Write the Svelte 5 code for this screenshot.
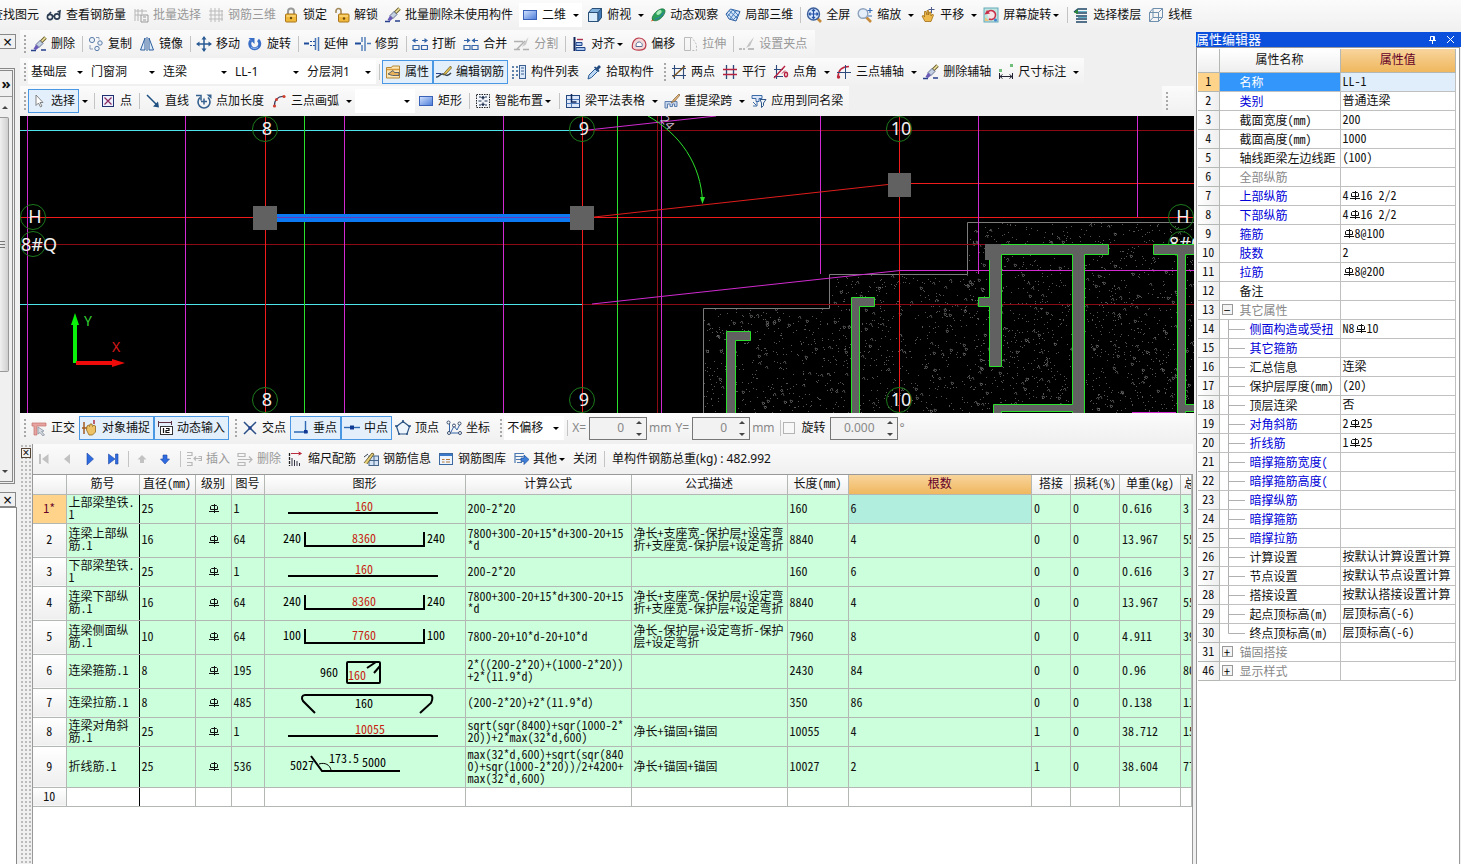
<script>
  const icons = {
    glasses: '<g fill="none" stroke="#2b3c52" stroke-width="1.6"><circle cx="4" cy="10" r="2.6"/><circle cx="11" cy="9.5" r="2.6"/><path d="M6.5 9.5l2-.5M13.5 8.5L14 4l-2.500 1M2 8.500L5 5"/></g>',
    batch: '<path d="M2 2v12M5 2v12M2 4h12M2 8h6M9 2v5" fill="none" stroke="#b5b5b5"/><path d="M8 8h7v7H8zM10 10h3M10 13h3" fill="none" stroke="#999"/>',
    mesh: '<path d="M3 1v14M7 1v14M11 1v14M14 3v11M1 4h14M1 8h14M1 12h14" fill="none" stroke="#bbb"/>',
    lock: '<path d="M5 8V4.500a3 3 0 0 1 6 0V8" fill="none" stroke="#9a9a9a" stroke-width="2"/><rect x="2.500" y="7" width="11" height="8" rx="1" fill="#f0b93c" stroke="#a9741a"/><path d="M3.500 9h9" stroke="#ffe59a"/><circle cx="8" cy="11" r="1.200" fill="#6b470d"/>',
    unlock: '<path d="M2 6V4a2.500 2.500 0 0 1 5 0v4" fill="none" stroke="#a38a5c" stroke-width="1.600"/><rect x="4.500" y="7" width="10.500" height="8" rx="1" fill="#f0b93c" stroke="#a9741a"/><path d="M5.500 9h8.500" stroke="#ffe59a"/><circle cx="10" cy="11.500" r="1.200" fill="#6b470d"/>',
    brush: '<path d="M14.500 1.500L10 6" stroke="#6d6030" stroke-width="3.600"/><path d="M14.500 1.500L10.500 5.500" stroke="#f3e7a0" stroke-width="1.600"/><path d="M9 4.500l3 3-4 4-3-3z" fill="#c3d0e2" stroke="#4a5878" stroke-width=".8"/><path d="M5 8.500l3 3-3 2.500-2.500-1z" fill="#6a5ab8"/><path d="M0 14.500h5M10 14h5" stroke="#27408c" stroke-width="1.600"/>',
    rect: '<defs><linearGradient id="rg" x2="1" y2="1"><stop stop-color="#d3e4ff"/><stop offset="1" stop-color="#4a7ad8"/></linearGradient></defs><rect x="1.500" y="3.500" width="13" height="9" fill="url(#rg)" stroke="#3a62b8"/>',
    cube: '<path d="M1.500 5.500L5 1.500h9.500v9L11 14.500H1.500z" fill="#7fb0dc" stroke="#2a5078"/><path d="M1.500 5.500H11v9H1.500z" fill="#d8ecfb" stroke="#2a5078"/><path d="M11 5.500l3.500-4v9l-3.500 4z" fill="#3f78b4" stroke="#2a5078"/>',
    orbit: '<path d="M1 14.500L5 13 3 10.500z" fill="#d65a20"/><path d="M3 13C0 11 6 3 11 2s5 3 2 7-8 6-10 4z" fill="#2aa05a" stroke="#156a38" stroke-width=".7"/><ellipse cx="9" cy="5.500" rx="3" ry="1.800" transform="rotate(-35 9 5.500)" fill="#a5ecb9"/><path d="M5 12c3 0 7-3 8.500-6.500" fill="none" stroke="#2b6fc0"/>',
    local: '<path d="M1 7l4.500-5L15 4.500 11 14 4 12z" fill="#cfe2f6" stroke="#2d5f9e"/><path d="M4 3.500l8.500 8M7.500 2.500l6 6M2.500 6.500l6 6.500M11.500 3.500L5 12M14 7L8 13M8 2.500L2.500 9.500" stroke="#3a76b8" stroke-width=".9" fill="none"/>',
    fit: '<path d="M11 11l4 4" stroke="#c58a3a" stroke-width="2.600"/><circle cx="7.500" cy="7" r="6" fill="#d5e6fb" stroke="#3c5f9a" stroke-width="1.400"/><path d="M7.500 2.500v9M3 7h9M6 4l1.500-1.500L9 4M6 10l1.500 1.500L9 10M4.500 5.500L3 7l1.500 1.500M10.500 5.500L12 7l-1.500 1.500" fill="none" stroke="#2452a8" stroke-width="1.100"/>',
    zoom: '<path d="M9 10l5 5" stroke="#c58a3a" stroke-width="2.600"/><circle cx="6" cy="6.500" r="4.800" fill="#e4eefb" stroke="#8ea2bc" stroke-width="1.400"/><path d="M13 1v5M10.500 3.500h5M11 9h4" stroke="#3a6eb8" stroke-width="1.200"/>',
    pan: '<path d="M2 9l1.500-.5 1 1.500V4.500h1.500L7 8V3.500h1.500V8l1-3h1.500v4l1.500-2 1 1-2.500 6.500H5z" fill="#edb94a" stroke="#a06f17" stroke-width=".8"/><path d="M11.500 0v6M8.500 2.500h6" stroke="#4a5a8a"/>',
    spin: '<rect x="1" y="1" width="14" height="14" fill="#bfe6e0" stroke="#62a9b8"/><path d="M2 10l4 4H2z" fill="#f0c27a"/><path d="M4 6a4.500 4.500 0 1 1 2 6" fill="#f7e3e6" stroke="#c8304a" stroke-width="1.600"/><path d="M1.500 7.500L4 3l3 3.500z" fill="#c8304a"/><circle cx="12.500" cy="13" r="1.500" fill="#3f7fd0"/>',
    floors: '<path d="M1 5l4-3h9M3 9h11M3 12h11M3 15h11M3 6h11" fill="none" stroke="#1e4566" stroke-width="1.500"/><path d="M1 5.500L5 2v5z" fill="#2b8a3a"/><path d="M5 4.500h9M5 10.500h9" stroke="#5bb0c8"/>',
    wire: '<path d="M1.500 5.500h9v9h-9zM5 1.500h9.500v9M1.500 5.500L5 1.500M10.500 5.500l4-4M10.500 14.500l4-4M5 1.500v9h9.500M1.500 14.500l3.500-4" fill="none" stroke="#6f8fae"/>',
    copy: '<circle cx="4" cy="4" r="2.600" fill="#eaf2fb" stroke="#5b7ba8"/><circle cx="12" cy="7" r="2.200" fill="#eaf2fb" stroke="#5b7ba8"/><circle cx="9" cy="12.500" r="2.200" fill="#eaf2fb" stroke="#5b7ba8"/><path d="M8 1.500h3v2M2 9v4h3" fill="none" stroke="#8a9cb8"/>',
    mirror: '<path d="M6 2v12H1.500zM10 2v12h4.500z" fill="#dce9f8" stroke="#2d5f9e"/><path d="M8 1v14" stroke="#2d5f9e"/>',
    move: '<path d="M8 1v14M1 8h14" stroke="#2a5b94" stroke-width="1.500"/><path d="M8 0l2.500 3.500h-5zM8 16l2.500-3.500h-5zM0 8l3.500-2.500v5zM16 8l-3.500-2.500v5z" fill="#2a5b94"/>',
    rotate: '<path d="M4 4.500a5 5 0 1 0 7-.5" fill="none" stroke="#3a6fc8" stroke-width="3"/><path d="M1.500 2h6v6z" fill="#3a6fc8"/><path d="M4 11a5 5 0 0 0 7 0" fill="none" stroke="#9fc0f2"/>',
    extend: '<path d="M0 7.500h5" stroke="#1d4c9a" stroke-width="2"/><path d="M6 5.500h5M6 9.500h5" stroke="#1d4c9a" stroke-dasharray="2 1"/><path d="M11.500 2v12M14.500 1v14" stroke="#4a77b8" stroke-width="1.500"/>',
    trim: '<path d="M0 7.500h6" stroke="#1d4c9a" stroke-width="2"/><path d="M7 1v5M7 9v6M10 1v14M12 7.500h4" stroke="#4a77b8" stroke-width="1.400"/>',
    brk: '<path d="M3 4.500h3M10 4.500h3M1 9.500h6v4H1zM9.500 9.500h6v4h-6z" fill="none" stroke="#3565a8" stroke-width="1.200"/><path d="M0 4.500L3.500 2v5zM16 4.500L12.500 2v5z" fill="#3565a8"/>',
    join: '<path d="M1 4.500h4M11 4.500h4M1 9.500h6v4H1zM9 9.500h6v4H9z" fill="none" stroke="#3565a8" stroke-width="1.200"/><path d="M7.500 4.500L4 2v5zM8.500 4.500L12 2v5z" fill="#3565a8"/>',
    split: '<path d="M0 5.500h9M0 13.500h6M9 13.500h6M3 13l8-8" fill="none" stroke="#b0b0b0" stroke-width="1.400"/><path d="M14.500 1L10 7l-2 4 4-2.500z" fill="#c8c8c8"/>',
    align: '<path d="M3.500 1v14" stroke="#10285c" stroke-width="2"/><path d="M5 6.500h6v3H5zM5 11.500h9v3H5z" fill="#a9c6ee" stroke="#1f458a"/><path d="M6 3.500h6" stroke="#b03050" stroke-width="1.400"/>',
    offset: '<path d="M1.500 12c-1-5 2-10 6.500-10s8 4 6.500 9c-1 4-11 4-13 1z" fill="#f3d9d9" stroke="#bb3b4b" stroke-width="1.200"/><path d="M5 10.500c0-3 1-4.500 3-4.500s4 2 3 4.500z" fill="#fff" stroke="#5a6d94"/>',
    stretch: '<path d="M2.500 14.500v-13h6v13z" fill="none" stroke="#bbb"/><path d="M9 1.500h1l4.500 7v6H9" fill="none" stroke="#bbb" stroke-dasharray="2 1.500"/>',
    grips: '<path d="M0 13h3M4 13h2M9 13h6" stroke="#aaa" stroke-width="1.500"/><path d="M15 1l-5 6-3 5 4-2z" fill="#c4c4c4"/>',
    props: '<path d="M1.500 3.500h5l1-1.500h7v12h-13z" fill="#fbe6b4" stroke="#b78735"/><path d="M2 5.500h12" stroke="#d89a3a" stroke-width="1.500"/><path d="M3 10l5-3.500 1.500 2H14v3H7.500z" fill="#e8b25a" stroke="#3d4b66" stroke-width=".8"/>',
    edit: '<path d="M0 13c3 1 4-4 7-3s4 3 8-1" fill="none" stroke="#33404f" stroke-width="1.500"/><path d="M14.500 2L9 8l-2 3 3-1 5.500-6z" fill="#e5c14f" stroke="#5e5326" stroke-width=".7"/><path d="M0 9.500h5" stroke="#27408c"/>',
    list: '<path d="M1 3h2M1 7h2M1 11h2M1 14h2M5 3h2M5 7h2M5 11h2" stroke="#2f5d93" stroke-width="1.300"/><rect x="8.500" y="1.500" width="6" height="13" fill="#dceafa" stroke="#3a5f90"/><path d="M10 4h3M10 7h3M10 10h3" stroke="#3a5f90"/>',
    pick: '<path d="M2 15l1-4 6-6 2.500 2.500-6 6z" fill="#bcd8f4" stroke="#2b5c94"/><path d="M8 3.500L12.500 8 13.500 7l-1-1.500L15 3l-2-2-2.500 2.500L9 2.500z" fill="#234b80"/>',
    two: '<path d="M3.500 1v14M12.500 1v14M1 4.500h14M1 11.500h14" stroke="#2d4a7c" stroke-width="1.100"/><path d="M2 13L14 2" stroke="#7a5520" stroke-width="1.400"/>',
    parallel: '<path d="M4.500 1v14M11.500 1v14" stroke="#2d4a7c" stroke-width="1.300"/><path d="M1 5.500h14M1 10.500h14" stroke="#b82040" stroke-width="1.300"/>',
    angle: '<path d="M3.500 1v14M1 12.500h9M1 5.500h9" stroke="#2d4a7c" stroke-width="1.100"/><path d="M1 14L12 2" stroke="#b82040" stroke-width="1.400"/><path d="M9 9.500l3-3" stroke="#b82040"/><ellipse cx="13" cy="10.500" rx="1.500" ry="2.200" fill="none" stroke="#b82040" stroke-width="1.400"/>',
    arc3: '<path d="M2 13.500C2 6 6 2.500 13 2.500" fill="none" stroke="#c02840" stroke-width="1.500"/><path d="M9.500 1v14M1 8.500h14" stroke="#2d4a7c"/><circle cx="2.500" cy="13" r="1.700" fill="#c02840"/>',
    dim: '<path d="M1.500 9v6M14.500 9v6M2 12.500h12M4.500 10.500l-2.500 2 2.500 2M11.500 10.500l2.500 2-2.500 2" fill="none" stroke="#223"/><path d="M1 5h3v3H1zM12 0h3v3h-3z" fill="#6fbf7a"/>',
    cursor: '<path d="M5 2v10.500l2.500-2.500L9.500 14l1.500-1-2-3.500H12z" fill="#fff" stroke="#777" stroke-width=".9"/>',
    point: '<rect x="2.500" y="2.500" width="11" height="11" fill="#eef0fb" stroke="#1f2f70"/><path d="M4.500 4.500l7 7M11.500 4.500l-7 7" stroke="#8a2a60" stroke-width="1.200"/>',
    line: '<path d="M2 2l10 10" stroke="#1f4f80" stroke-width="1.500"/><path d="M14 14.500l-1-6-5 5z" fill="#1f4f80"/>',
    ptlen: '<path d="M4 4.500a6 6 0 1 0 8 0" fill="none" stroke="#35618f" stroke-width="1.600"/><path d="M0 2.500h5v5M8 5.500v6M5 8.500h6" fill="none" stroke="#35618f" stroke-width="1.500"/><path d="M10.500 1.500h5v4.500z" fill="#35618f"/>',
    arc: '<path d="M3.500 13C3 7 7 3 13 3.500" fill="none" stroke="#3a3a5c" stroke-width="1.200"/><circle cx="3.500" cy="13" r="1.600" fill="#d04030"/><circle cx="5.500" cy="6.500" r="1.500" fill="#d04030"/><circle cx="13" cy="3.500" r="1.600" fill="#d04030"/>',
    smart: '<rect x="1.500" y="1.500" width="13" height="13" fill="#f2f6fb" stroke="#222" stroke-dasharray="1.500 1"/><path d="M8 3.500v3M8 9.500v3M3.500 8h3M9.500 8h3M4 4h2M10 4h2M4 12h2M10 12h2M6.500 5L8 3.500 9.500 5M6.500 11L8 12.500 9.500 11" fill="none" stroke="#1f2f50" stroke-width="1.200"/>',
    table: '<rect x="1.500" y="2.500" width="13" height="12" fill="#dce8fa" stroke="#24487e"/><path d="M1.500 6.500h13M1.500 10.500h13M6.500 2.500v12" stroke="#4a77b8"/><path d="M6.500 1v8h5" fill="none" stroke="#10285c" stroke-width="1.500"/>',
    respan: '<path d="M1 8.500h12v5h-2.500v-2.500h-2v2.500H6v-2.500H3.500v4H1z" fill="#c5d5ec" stroke="#5f7fae"/><path d="M15 1l-5 5-3 4 4-2 5-6z" fill="#e3b377" stroke="#80603a" stroke-width=".7"/>',
    apply: '<path d="M1 2.500h10v3H8v3H5v-3H1z" fill="#dce8fa" stroke="#3d6ba8"/><path d="M9 6.500h6l-2.500 3.500v2.500l-2 2V10z" fill="#f1f6fd" stroke="#2f5688"/><path d="M2 9l3.500 3.500M6 9v4H2" stroke="#3d6ba8" fill="none"/>',
    ortho: '<path d="M1 3h14v3H6v9H3V6H1z" fill="#e7a3a0" stroke="#c4706c" stroke-width=".7"/><path d="M7 7v7l2-1.500 3 3.500 1.500-1-3-3.500 2.500-.5z" fill="#d9dde3" stroke="#8892a0" stroke-width=".8"/>',
    osnap: '<path d="M2 2v12M0 8h5" stroke="#a35b20" stroke-width="1.500"/><path d="M5 6l1.500-1 1 1.500L8 4h2l.5 2.500L12 5l1.500 1v6l-3 3H7L4.500 10z" fill="#edc266" stroke="#96671b" stroke-width=".8"/><path d="M12 0v4" stroke="#b03040" stroke-width="1.500"/>',
    dyn: '<path d="M1 2.500h14M1.500 1v6M14.500 1v4" stroke="#5c3040"/><rect x="3.500" y="6.500" width="12" height="8" fill="#fff" stroke="#333"/><path d="M6.500 8v5M9 8.500h3v2H9v2h3.500" fill="none" stroke="#111" stroke-width="1.200"/>',
    cross: '<path d="M2 2l12 12M14 2L2 14" stroke="#2a4f86" stroke-width="1.500"/><circle cx="8" cy="8" r="1.700" fill="#1f3f90"/>',
    perp: '<path d="M1 12h14M12.500 1v11" stroke="#2f69b4" stroke-width="1.400"/><rect x="11" y="10" width="3.500" height="3.500" fill="#123a94"/>',
    mid: '<path d="M0 7.500h16" stroke="#2f69b4" stroke-width="1.400"/><rect x="6" y="5.500" width="4" height="4" fill="#123a94"/>',
    pent: '<path d="M8 1.500l6.500 5-2.500 7.500H4L1.500 6.500z" fill="#eef5fc" stroke="#2d5585" stroke-width="1.200"/><path d="M8 0v3M13 6h3M0 6h3M3 14h2M11 14h2" stroke="#2d5585" stroke-width="1.600"/>',
    coord: '<path d="M3.500 3v10h11M5 12l3-6 3 4 3-6" fill="none" stroke="#3565a8"/><g fill="#fff" stroke="#3a4f70"><circle cx="2.500" cy="2.500" r="1.500"/><circle cx="3" cy="13" r="1.500"/><circle cx="8" cy="5.500" r="1.500"/><circle cx="13.500" cy="3.500" r="1.500"/><circle cx="14" cy="13" r="1.500"/></g>',
    first: '<path d="M3 3h2v10H3zM12.500 3v10L6 8z" fill="#c2c2c2"/>',
    prev: '<path d="M11 3v10L5 8z" fill="#c2c2c2"/>',
    next: '<path d="M5 2v12l6.500-6z" fill="#2f6be0" stroke="#1c46a4" stroke-width=".6"/>',
    last: '<path d="M3.500 3v10L10 8zM10.500 3h2.500v10h-2.500z" fill="#2f6be0" stroke="#1c46a4" stroke-width=".6"/>',
    up: '<path d="M8 4l4.500 4.500h-2.500V12H6V8.500H3.500z" fill="#c2c2c2"/>',
    down: '<path d="M8 13l4.500-5h-2.500V4H6v4H3.500z" fill="#2f6be0" stroke="#1c46a4" stroke-width=".6"/>',
    insert: '<path d="M1 1.500h5v3H1M1 7.500h4M1 11.500h5v3H1M8 7.500h8M10 5.500l-2 2 2 2M12.500 5.500h3v4h-3" fill="none" stroke="#b8b8b8" stroke-width="1.200"/>',
    del: '<path d="M1 2.500h7v3H1zM1 11.500h7v3H1zM1 8.500h14M12 5.500l3 3-3 3" fill="none" stroke="#b8b8b8" stroke-width="1.200"/>',
    scale: '<path d="M1.500 2v13" stroke="#222" stroke-width="1.300" stroke-dasharray="3 1"/><path d="M3 2.500h10M10.500 1l3 1.500-3 1.500" fill="none" stroke="#b83040"/><path d="M4 7v8M6.500 9v6M9 10v5M11.500 12v3" stroke="#334"/>',
    info: '<rect x="6" y="5" width="9.500" height="9.500" fill="#d3e2f4" stroke="#46648a"/><path d="M6 9.500h9.500M11 5v9.500" stroke="#46648a"/><path d="M1 12L9 2l2 1-7 10" fill="#e7d27a" stroke="#55491c" stroke-width=".8"/><path d="M1 6l4-3" stroke="#33404f"/>',
    lib: '<rect x="1.500" y="2.500" width="13" height="11" fill="#eef4fb" stroke="#3c6aa0"/><path d="M2 4h12" stroke="#3c78c8" stroke-width="2"/><path d="M4 8.500h2.500M8 8.500h4M4 11h2.500M8 11h4" stroke="#b87a3a" stroke-width="1.200"/>',
    other: '<path d="M2 2.500h9M1.500 5.500h9M3 8.500h6M4 11.500h5M2 2v10" fill="none" stroke="#4c78b0" stroke-width="1.200"/><path d="M8 7h3V4l5 4.500-5 5v-3H8z" fill="#3f7fd8" stroke="#20539e" stroke-width=".7"/>'
  };

  // tool: [icon, label, flags]; flags: d = disabled, a = active, s = split drop-down, m = attached drop-down, w = white
  const topBar = [
    ['glasses', '查找图元'], ['glasses', '查看钢筋量'], ['batch', '批量选择', 'd'], ['mesh', '钢筋三维', 'd'],
    ['lock', '锁定'], ['unlock', '解锁'], ['brush', '批量删除未使用构件'], 'gap',
    ['rect', '二维', 'sw'], 'gap', ['cube', '俯视', 's'], ['orbit', '动态观察'], ['local', '局部三维'], 'sep',
    ['fit', '全屏'], ['zoom', '缩放', 's'], ['pan', '平移', 's'], ['spin', '屏幕旋转', 'm'], 'sep',
    ['floors', '选择楼层'], ['wire', '线框']
  ];

  const editBar = [
    'grip', ['brush', '删除'], 'sep', ['copy', '复制'], ['mirror', '镜像'], 'sep', ['move', '移动'], ['rotate', '旋转'], 'sep',
    ['extend', '延伸'], ['trim', '修剪'], 'sep', ['brk', '打断'], ['join', '合并'], ['split', '分割', 'd'], 'sep',
    ['align', '对齐', 'm'], ['offset', '偏移'], ['stretch', '拉伸', 'd'], 'sep', ['grips', '设置夹点', 'd']
  ];

  const componentBar = [
    'grip', { combo: '基础层', name: '楼层', small: true }, { combo: '门窗洞', name: '构件类型' }, { combo: '连梁', name: '构件' },
    { combo: 'LL-1', name: '构件名称' }, { combo: '分层洞1', name: '分层' }, 'sep',
    ['props', '属性', 'a'], ['edit', '编辑钢筋', 'a'], ['list', '构件列表'], ['pick', '拾取构件']
  ];

  const axisBar = [
    'grip', ['two', '两点'], ['parallel', '平行'], ['angle', '点角', 's'], ['arc3', '三点辅轴', 's'],
    ['brush', '删除辅轴'], ['dim', '尺寸标注', 's']
  ];

  const drawBar = [
    'grip', ['cursor', '选择', 'as'], 'sep', ['point', '点'], 'sep', ['line', '直线'], ['ptlen', '点加长度'], ['arc', '三点画弧', 's'],
    { combo: '', name: '画弧方式', small: true }, ['rect', '矩形'], 'sep', ['smart', '智能布置', 'm'], 'sep',
    ['table', '梁平法表格', 's'], ['respan', '重提梁跨', 's'], ['apply', '应用到同名梁']
  ];

  const snapBar = [
    'grip', ['ortho', '正交'], ['osnap', '对象捕捉', 'a'], ['dyn', '动态输入', 'a'], 'gap', 'grip',
    ['cross', '交点'], ['perp', '垂点', 'a'], ['mid', '中点', 'a'], ['pent', '顶点'], ['coord', '坐标'], 'gap', 'grip',
    { combo: '不偏移', name: '偏移方式', small: true }, 'sep'
  ];

  const rebarBar = [
    ['insert', '插入', 'd'], ['del', '删除', 'd'], ['scale', '缩尺配筋'], ['info', '钢筋信息'],
    ['lib', '钢筋图库'], ['other', '其他', 'm'], ['', '关闭'], 'sep'
  ];

  const columns = ['筋号', '直径(mm)', '级别', '图号', '图形', '计算公式', '公式描述', '长度(mm)', '根数', '搭接', '损耗(%)', '单重(kg)', '总重(kg)'];

  const bendNote = '净长+支座宽-保护层+设定弯\n折+支座宽-保护层+设定弯折';
  const bendFormula = '7800+300-20+15*d+300-20+15\n*d';

  const rebars = [
    { no: '1*', h: 29, name: '上部梁垫铁.\n1', d: 25, fig: 1, shape: 'straight', len: '160', formula: '200-2*20', note: '', total: 160, count: 6, lap: 0, unit: '0.616', sum: '3.696' },
    { no: '2', h: 34, name: '连梁上部纵\n筋.1', d: 16, fig: 64, shape: 'bent', len: '8360', side: '240', formula: bendFormula, note: bendNote, total: 8840, count: 4, lap: 0, unit: '13.967', sum: '55.868' },
    { no: '3', h: 29, name: '下部梁垫铁.\n1', d: 25, fig: 1, shape: 'straight', len: '160', formula: '200-2*20', note: '', total: 160, count: 6, lap: 0, unit: '0.616', sum: '3.696' },
    { no: '4', h: 34, name: '连梁下部纵\n筋.1', d: 16, fig: 64, shape: 'bent', len: '8360', side: '240', formula: bendFormula, note: bendNote, total: 8840, count: 4, lap: 0, unit: '13.967', sum: '55.868' },
    { no: '5', h: 34, name: '连梁侧面纵\n筋.1', d: 10, fig: 64, shape: 'bent', len: '7760', side: '100', formula: '7800-20+10*d-20+10*d', note: '净长-保护层+设定弯折-保护\n层+设定弯折', total: 7960, count: 8, lap: 0, unit: '4.911', sum: '39.288' },
    { no: '6', h: 34, name: '连梁箍筋.1', d: 8, fig: 195, shape: 'stirrup', formula: '2*((200-2*20)+(1000-2*20))\n+2*(11.9*d)', note: '', total: 2430, count: 84, lap: 0, unit: '0.96', sum: '80.64' },
    { no: '7', h: 29, name: '连梁拉筋.1', d: 8, fig: 485, shape: 'tie', formula: '(200-2*20)+2*(11.9*d)', note: '', total: 350, count: 86, lap: 0, unit: '0.138', sum: '11.868' },
    { no: '8', h: 29, name: '连梁对角斜\n筋.1', d: 25, fig: 1, shape: 'straight', len: '10055', formula: 'sqrt(sqr(8400)+sqr(1000-2*\n20))+2*max(32*d,600)', note: '净长+锚固+锚固', total: 10055, count: 4, lap: 1, unit: '38.712', sum: '154.848' },
    { no: '9', h: 41, name: '折线筋.1', d: 25, fig: 536, shape: 'fold', formula: 'max(32*d,600)+sqrt(sqr(840\n0)+sqr(1000-2*20))/2+4200+\nmax(32*d,600)', note: '净长+锚固+锚固', total: 10027, count: 2, lap: 1, unit: '38.604', sum: '77.208' }
  ];

  // k: b = blue (public), g = grey (group), child rows hang on the tree line
  const properties = [
    { n: 1, name: '名称', value: 'LL-1' },
    { n: 2, name: '类别', value: '普通连梁', k: 'b' },
    { n: 3, name: '截面宽度(mm)', value: '200' },
    { n: 4, name: '截面高度(mm)', value: '1000' },
    { n: 5, name: '轴线距梁左边线距', value: '(100)' },
    { n: 6, name: '全部纵筋', value: '', k: 'g' },
    { n: 7, name: '上部纵筋', value: '4Φ16 2/2', k: 'b' },
    { n: 8, name: '下部纵筋', value: '4Φ16 2/2', k: 'b' },
    { n: 9, name: '箍筋', value: 'Φ8@100', k: 'b' },
    { n: 10, name: '肢数', value: '2', k: 'b' },
    { n: 11, name: '拉筋', value: 'Φ8@200', k: 'b' },
    { n: 12, name: '备注', value: '' },
    { n: 13, name: '其它属性', value: '', k: 'g', toggle: '−' },
    { n: 14, name: '侧面构造或受扭', value: 'N8Φ10', k: 'b', child: true },
    { n: 15, name: '其它箍筋', value: '', k: 'b', child: true },
    { n: 16, name: '汇总信息', value: '连梁', child: true },
    { n: 17, name: '保护层厚度(mm)', value: '(20)', child: true },
    { n: 18, name: '顶层连梁', value: '否', child: true },
    { n: 19, name: '对角斜筋', value: '2Φ25', k: 'b', child: true },
    { n: 20, name: '折线筋', value: '1Φ25', k: 'b', child: true },
    { n: 21, name: '暗撑箍筋宽度(', value: '', k: 'b', child: true },
    { n: 22, name: '暗撑箍筋高度(', value: '', k: 'b', child: true },
    { n: 23, name: '暗撑纵筋', value: '', k: 'b', child: true },
    { n: 24, name: '暗撑箍筋', value: '', k: 'b', child: true },
    { n: 25, name: '暗撑拉筋', value: '', k: 'b', child: true },
    { n: 26, name: '计算设置', value: '按默认计算设置计算', child: true },
    { n: 27, name: '节点设置', value: '按默认节点设置计算', child: true },
    { n: 28, name: '搭接设置', value: '按默认搭接设置计算', child: true },
    { n: 29, name: '起点顶标高(m)', value: '层顶标高(-6)', child: true },
    { n: 30, name: '终点顶标高(m)', value: '层顶标高(-6)', child: true, last: true },
    { n: 31, name: '锚固搭接', value: '', k: 'g', toggle: '+' },
    { n: 46, name: '显示样式', value: '', k: 'g', toggle: '+' }
  ];

  // concrete hatch: fixed seed so that the pattern is stable between renders
  function hatch() {
    let seed = 7;
    const rnd = () => (seed = (seed * 16807) % 2147483647) / 2147483647;
    let dots = '';
    let stones = '';
    for (let i = 0; i < 2300; i++) {
      dots += `M${703 + Math.floor(rnd() * 491)} ${222 + Math.floor(rnd() * 191)}h1v1h-1z`;
    }
    for (let i = 0; i < 330; i++) {
      const x = 703 + Math.floor(rnd() * 491);
      const y = 222 + Math.floor(rnd() * 191);
      stones += rnd() > 0.5 ? `M${x} ${y}l3 1l-2 2z` : `M${x} ${y}l2 -2l1 3`;
    }
    return { dots, stones };
  }
  const concrete = hatch();

  const axisMarks = [
    { x: 265, y: 129, t: '8' }, { x: 582, y: 129, t: '9' }, { x: 899, y: 129, t: '10' },
    { x: 265, y: 400, t: '8' }, { x: 582, y: 400, t: '9' }, { x: 899, y: 400, t: '10' },
    { x: 33, y: 217, t: 'H' }, { x: 1181, y: 217, t: 'H' }
  ];

  let selected = $state(1);
</script>

{#snippet icon(name)}
  <svg class="icon" viewBox="0 0 16 16" aria-hidden="true">{@html icons[name]}</svg>
{/snippet}

{#snippet bar(items)}
  {#each items as it}
    {#if it === 'sep'}
      <span class="sep"></span>
    {:else if it === 'gap'}
      <span class="gap"></span>
    {:else if it === 'grip'}
      <span class="grip"></span>
    {:else if Array.isArray(it)}
      {@const f = it[2] ?? ''}
      <button class="tool" class:active={f.includes('a')} class:white={f.includes('w')} disabled={f.includes('d')}>
        {#if it[0]}{@render icon(it[0])}{/if}
        <span>{it[1]}</span>
        {#if f.includes('m')}<i class="caret attached"></i>{/if}
      </button>
      {#if f.includes('s')}
        <button class="split" class:white={f.includes('w')} aria-label="{it[1]}选项"><i class="caret"></i></button>
      {/if}
    {:else}
      <span class="combo" class:small={it.small}>
        <select aria-label={it.name}><option>{it.combo}</option></select>
        <i class="caret"></i>
      </span>
    {/if}
  {/each}
{/snippet}

{#snippet rebarMark()}
  <svg class="mark" viewBox="0 0 12 10" role="img" aria-label="三级钢"><path d="M3.500 1.500h5l1 1v3h-7v-3zM6.500 0v9M1 7.500h10" fill="none" stroke="currentColor" /></svg>
{/snippet}

{#snippet spinner(id, value, wide)}
  <span class="spinner" class:wide>
    <input {id} type="text" {value} disabled />
    <span class="steps"><i class="up"></i><i class="down"></i></span>
  </span>
{/snippet}

{#snippet shape(r)}
  <svg class="shape" width="200" height={r.h - 1} viewBox="0 0 200 {r.h - 1}">
    {#if r.shape === 'straight'}
      <text class="red" x="90" y="16">{r.len}</text>
      <path d="M23 18H173" />
    {:else if r.shape === 'bent'}
      <text x="18" y="19">{r.side}</text>
      <path d="M40 8V22H159V8" />
      <text class="red" x="87" y="19">{r.len}</text>
      <text x="162" y="19">{r.side}</text>
    {:else if r.shape === 'stirrup'}
      <text x="55" y="22">960</text>
      <rect x="82" y="7" width="33" height="21" rx="1" />
      <path d="M111 7L102 13M115 11L109 18" />
      <text class="red" x="83" y="25">160</text>
    {:else if r.shape === 'tie'}
      <path d="M50 24L38 12C36 9 37 6 40 6H165C168 6 168 10 166 14L155 24" />
      <text x="90" y="19">160</text>
    {:else}
      <text x="25" y="23">5027</text>
      <path d="M46 9L57 24H135" />
      <path class="thin" d="M54 17C60 15 65 18 66 23" />
      <text x="64" y="16">173.5</text>
      <text x="97" y="20">5000</text>
    {/if}
  </svg>
{/snippet}

<div class="app">
  <nav class="bar top">{@render bar(topBar)}</nav>

  <aside class="left">
    <button class="close" aria-label="关闭">×</button>
    <div class="dock">
      <button class="more">»</button>
      <button class="arrow" aria-label="向上"><i class="up"></i></button>
      <div class="thumb"><span></span></div>
      <div class="track"></div>
      <button class="arrow" aria-label="向下"><i class="down"></i></button>
    </div>
    <button class="close" aria-label="关闭">×</button>
    <div class="blank"></div>
  </aside>

  <main>
    <nav class="bar fit">{@render bar(editBar)}</nav>
    <div class="line">
      <nav class="bar">{@render bar(componentBar)}</nav>
      <nav class="bar">{@render bar(axisBar)}</nav>
    </div>
    <div class="line tall">
      <nav class="bar">{@render bar(drawBar)}</nav>
      <nav class="bar stub"><span class="grip"></span></nav>
    </div>

    <svg class="canvas" viewBox="20 116 1174 297" preserveAspectRatio="xMinYMin slice">
      <defs>
        <clipPath id="slab"><path d="M703 413V308H829V274H967V222H1194V413z" /></clipPath>
      </defs>
      <rect x="20" y="116" width="1174" height="297" fill="#000" />
      <g clip-path="url(#slab)">
        <path d={concrete.dots} fill="#555" />
        <path d={concrete.stones} fill="none" stroke="#777" stroke-width="0.600" />
      </g>
      <g fill="none">
        <path d="M703.500 413V308.500H829.500V274.500H967.500V222.500H1194" stroke="#7c7c7c" />
        <path d="M582 130.500H1194M20 244.500H1194M582 304.500H1194M657.500 116V413" stroke="#8c0a14" />
        <path d="M20 130.500H582M20 304.500H582" stroke="#4fe3ea" />
        <path d="M20 217.500H1194M911 183.500H1194M265.500 116V413M582.500 116V413M899.500 116V413" stroke="#ee1c1c" />
        <path d="M27.500 116V413M185.500 116V413M344.500 116V413M503.500 116V413M661.500 116V413M820.500 116V274M978.500 116V274M1137.500 116V217M900 270.500H1194M1132 412.500H1176" stroke="#d02ad0" />
        <path d="M304.500 116V413M617.500 116V413" stroke="#2be02b" />
      </g>
      <path d="M592 304L900 270.500M588 130L716 116" stroke="#d02ad0" />
      <path d="M594 217L888 184.500" stroke="#e01c1c" />
      <path d="M648 116C680 134 701 164 702.500 202" fill="none" stroke="#2be02b" />
      <path d="M700 197h5l-2.500 7z" fill="#2be02b" />
      <rect x="277" y="214" width="293" height="8" fill="#0c78f2" />
      <path d="M277 217.500H570" stroke="#6a3ab8" />
      <g fill="#616161">
        <rect x="253" y="206" width="24" height="24" />
        <rect x="570" y="206" width="24" height="24" />
        <rect x="888" y="173" width="23" height="24" />
      </g>
      <g fill="none" stroke="#1d7a1d">
        {#each axisMarks as m}
          <circle cx={m.x} cy={m.y} r="12.500" />
        {/each}
        <circle cx="33" cy="244" r="12.500" />
        <circle cx="1181" cy="244" r="12.500" />
      </g>
      <g class="axis-text">
        {#each axisMarks as m}
          <text x={m.x + 2} y={m.y + 6}>{m.t}</text>
        {/each}
        <text x="39" y="251">8#Q</text>
        <text x="1187" y="250">8#Q</text>
        <text class="tiny" x="668" y="127" transform="rotate(50 668 122)">24</text>
      </g>
      <g fill="#616161" stroke="#2be02b">
        <path d="M726.500 414V331.500H750.500V340.500H735.500V414z" />
        <path d="M851.500 414V297.500H874.500V306.500H859.500V414z" />
        <path d="M993.500 414V404.500H1072.500V254.500H1001.500V366.500H989.500V306.500H978.500V297.500H989.500V244.500H1108.500V254.500H1084.500V414H1072.500V411.500H1001.500V414z" />
        <path d="M1195 254.500H1185.500V404.500H1195V411.500H1185.500V414H1177.500V254.500H1153.500V244.500H1195z" />
      </g>
      <rect x="985" y="244" width="16" height="16" fill="#616161" />
      <path d="M75 363V324" stroke="#0bf00b" stroke-width="4" />
      <path d="M71 325L75 313L79 325z" fill="#0bf00b" />
      <path d="M76 363H113" stroke="#f00b0b" stroke-width="4" />
      <path d="M112 359L125 363L112 367z" fill="#f00b0b" />
      <text class="dir" x="84" y="326" fill="#35d035">Y</text>
      <text class="dir" x="112" y="352" fill="#d81818">X</text>
    </svg>

    <div class="bar tall">
      {@render bar(snapBar)}
      <label for="off-x">X=</label>
      {@render spinner('off-x', '0', false)}
      <span class="unit">mm</span>
      <label for="off-y">Y=</label>
      {@render spinner('off-y', '0', false)}
      <span class="unit">mm</span>
      <span class="sep"></span>
      <label class="check"><input type="checkbox" disabled /><span>旋转</span></label>
      {@render spinner('angle', '0.000', true)}
      <span class="unit">°</span>
    </div>

    <section class="rebar">
      <div class="handle"><button aria-label="关闭">×</button></div>
      <div class="rebar-body">
        <div class="bar tall">
          <button class="nav" aria-label="首条" disabled>{@render icon('first')}</button>
          <button class="nav" aria-label="上一条" disabled>{@render icon('prev')}</button>
          <button class="nav" aria-label="下一条">{@render icon('next')}</button>
          <button class="nav" aria-label="末条">{@render icon('last')}</button>
          <span class="sep"></span>
          <button class="nav" aria-label="上移" disabled>{@render icon('up')}</button>
          <button class="nav" aria-label="下移">{@render icon('down')}</button>
          <span class="sep"></span>
          {@render bar(rebarBar)}
          <span class="total">单构件钢筋总重(kg) : 482.992</span>
        </div>
        <div class="sheet">
          <table class="grid">
            <colgroup>
              <col class="c-no" /><col class="c-name" /><col class="c-dia" /><col class="c-small" /><col class="c-fig" />
              <col class="c-shape" /><col class="c-formula" /><col class="c-note" /><col class="c-len" /><col />
              <col class="c-lap" /><col class="c-loss" /><col class="c-unit" /><col class="c-sum" />
            </colgroup>
            <thead>
              <tr>
                <th></th>
                {#each columns as c}
                  <th class:hot={c === '根数'}>{c}</th>
                {/each}
              </tr>
            </thead>
            <tbody>
              {#each rebars as r, i}
                <tr style:height="{r.h}px">
                  <th class:current={i === 0}>{r.no}</th>
                  <td class="name">{r.name}</td>
                  <td>{r.d}</td>
                  <td class="center">{@render rebarMark()}</td>
                  <td>{r.fig}</td>
                  <td class="figure">{@render shape(r)}</td>
                  <td>{r.formula}</td>
                  <td>{r.note}</td>
                  <td>{r.total}</td>
                  <td class:picked={i === 0}>{r.count}</td>
                  <td>{r.lap}</td>
                  <td>0</td>
                  <td>{r.unit}</td>
                  <td>{r.sum}</td>
                </tr>
              {/each}
              <tr class="empty">
                <th>10</th>
                <td class="name"></td>
                {#each columns.slice(1) as c}<td></td>{/each}
              </tr>
            </tbody>
          </table>
        </div>
      </div>
    </section>
  </main>

  <aside class="panel">
    <header>
      <h2>属性编辑器</h2>
      <button aria-label="固定">
        <svg viewBox="0 0 9 9"><path d="M2.500 5V1.500h4V5M1 5.500h7M4.500 6v3M5.500 1.500v4" fill="none" stroke="#fff" /></svg>
      </button>
      <button aria-label="关闭">
        <svg viewBox="0 0 9 9"><path d="M1 1l7 7M8 1l-7 7" fill="none" stroke="#fff" /></svg>
      </button>
    </header>
    <div class="panel-body">
      <table>
        <colgroup><col class="p-no" /><col class="p-name" /><col /></colgroup>
        <thead>
          <tr><th></th><th>属性名称</th><th class="hot">属性值</th></tr>
        </thead>
        <tbody>
          {#each properties as p (p.n)}
            <tr class:selected={selected === p.n} onclick={() => (selected = p.n)}>
              <th>{p.n}</th>
              <td class="p-label {p.k ?? ''}">
                <div>
                  {#if p.child}
                    <svg class="branch" width="30" height="18" viewBox="0 0 30 18"><path d="M8.500 {p.last ? '0V9.500' : '0V18'}M8.500 9.500H25" /></svg>
                  {:else if p.toggle}
                    <button aria-label="{p.name}展开"><i>{p.toggle}</i></button>
                  {:else}
                    <span class="indent"></span>
                  {/if}
                  <span>{p.name}</span>
                </div>
              </td>
              <td>{#each p.value.split('Φ') as part, i}{#if i > 0}{@render rebarMark()}{/if}{part}{/each}</td>
            </tr>
          {/each}
        </tbody>
      </table>
    </div>
  </aside>
</div>

<style>
  :global(body) {
    background: #f0f0f0;
  }

  .app {
    display: grid;
    grid-template-columns: 20px minmax(0, 1fr) 267px;
    grid-template-rows: 30px minmax(0, 1fr);
    height: 100vh;
    overflow: hidden;
    background: #f0f0f0;
    color: #111;
    font: 12px/16px 'Noto Sans', 'Noto Sans CJK SC', sans-serif;
  }

  button,
  input,
  select {
    font: inherit;
    color: inherit;
    margin: 0;
    box-sizing: border-box;
  }

  button {
    padding: 0;
    border: 0;
    background: none;
  }

  /* toolbars */
  .bar {
    display: flex;
    align-items: center;
    height: 28px;
    white-space: nowrap;
    background: linear-gradient(#fbfbfb, #f0f0f0);
  }

  .bar.top {
    grid-column: 1 / -1;
    height: 30px;
    margin-left: -32px;
  }

  .bar.fit {
    width: fit-content;
    padding-right: 4px;
  }

  .line {
    display: flex;
  }

  .line .bar {
    padding-right: 2px;
  }

  .line.tall .bar,
  .bar.tall {
    height: 30px;
  }

  .line .bar.stub {
    width: 32px;
    box-sizing: border-box;
    margin-left: auto;
  }

  .tool {
    display: flex;
    align-items: center;
    gap: 4px;
    flex: none;
    height: 24px;
    padding: 0 3px 0 2px;
    border: 1px solid transparent;
  }

  .tool:disabled {
    color: #999;
  }

  .tool.active {
    border-color: #4a98e4;
    background: #e3f0fc;
  }

  .white {
    background: #fff;
  }

  .icon {
    width: 16px;
    height: 16px;
    flex: none;
  }

  .caret {
    width: 0;
    height: 0;
    border: 3px solid transparent;
    border-top-color: #000;
    border-bottom: 0;
  }

  .caret.attached {
    margin: 0 1px 0 -2px;
  }

  .split {
    display: flex;
    align-items: center;
    justify-content: center;
    width: 12px;
    height: 24px;
    flex: none;
  }

  .sep {
    width: 1px;
    height: 16px;
    margin: 0 2px 0 3px;
    background: #c4c4c4;
    flex: none;
  }

  .gap {
    width: 2px;
    flex: none;
  }

  .grip {
    width: 2px;
    height: 18px;
    margin: 0 2px 0 4px;
    background: repeating-linear-gradient(#a8a8a8 0 2px, transparent 2px 4px);
    flex: none;
  }

  .combo {
    display: flex;
    align-items: center;
    width: 72px;
    height: 24px;
    box-sizing: border-box;
    padding: 0 5px 0 3px;
    background: #fff;
    flex: none;
  }

  .combo.small {
    width: 60px;
  }

  .combo select {
    flex: 1;
    min-width: 0;
    padding: 0;
    border: 0;
    background: none;
    appearance: none;
  }

  /* left dock */
  .left {
    display: flex;
    flex-direction: column;
    padding: 4px 3px 0 0;
  }

  .close {
    width: 16px;
    height: 15px;
    border: 1px solid #888;
    border-left: 0;
    font-size: 16px;
    line-height: 12px;
    flex: none;
  }

  .dock {
    display: flex;
    flex-direction: column;
    flex: 413 1 0;
    width: 15px;
    box-sizing: border-box;
    margin: 19px 0 8px;
    border: 3px double #888;
    border-left: 0;
    background: #f0f0f0;
  }

  .more {
    height: 26px;
    border-bottom: 1px solid #999;
    font-size: 15px;
    font-weight: bold;
    line-height: 15px;
  }

  .arrow {
    display: flex;
    align-items: center;
    justify-content: center;
    height: 20px;
    width: 9px;
  }

  .thumb {
    display: flex;
    align-items: center;
    flex: 250 1 0;
    width: 9px;
    box-sizing: border-box;
    border: 1px solid #999;
    border-left: 0;
    border-radius: 0 2px 2px 0;
    background: linear-gradient(90deg, #f0f0f0, #cfcfcf);
  }

  .thumb span {
    width: 5px;
    height: 8px;
    background: repeating-linear-gradient(#777 0 1px, transparent 1px 3px);
  }

  .track {
    flex: 88 1 0;
  }

  .up,
  .down {
    width: 0;
    height: 0;
    border: 3px solid transparent;
  }

  .up {
    border-top: 0;
    border-bottom-color: #444;
  }

  .down {
    border-bottom: 0;
    border-top-color: #444;
  }

  .blank {
    flex: 358 1 0;
    border: 1px solid #888;
    border-left: 0;
    border-bottom: 0;
    background: #fff;
  }

  /* middle */
  main {
    display: flex;
    flex-direction: column;
    min-width: 0;
  }

  .canvas {
    display: block;
    width: 100%;
    height: 297px;
    flex: none;
  }

  .axis-text {
    font: 18px 'Noto Sans', sans-serif;
    fill: #f0f0f0;
    text-anchor: middle;
  }

  .axis-text .tiny {
    font-size: 12px;
    fill: #c8b0c8;
  }

  .dir {
    font: 14px 'Noto Sans', sans-serif;
  }

  .bar label,
  .unit {
    color: #888;
  }

  .bar label {
    margin: 0 3px 0 2px;
  }

  .unit {
    margin: 0 2px;
  }

  .bar .check {
    display: flex;
    align-items: center;
    gap: 7px;
    color: #111;
    margin: 0 4px 0 0;
  }

  .check input {
    appearance: none;
    width: 12px;
    height: 12px;
    border: 1px solid #b4b4b4;
    background: #f8f8f8;
  }

  .spinner {
    display: flex;
    width: 58px;
    height: 23px;
    box-sizing: border-box;
    border: 1px solid #777;
    background: #f2f2f2;
    color: #888;
  }

  .spinner.wide {
    width: 68px;
  }

  .spinner input {
    width: 100%;
    min-width: 0;
    border: 0;
    padding: 0 8px 0 0;
    background: none;
    text-align: right;
  }

  .steps {
    display: flex;
    flex-direction: column;
    justify-content: space-between;
    padding: 3px 4px;
  }

  .rebar {
    display: flex;
    flex: 1;
    min-height: 0;
    padding-top: 1px;
  }

  .handle {
    width: 12px;
    flex: none;
    border-right: 1px solid #999;
    background: radial-gradient(circle, #bbb 1px, transparent 1px) 0 0 / 4px 4px;
  }

  .handle button {
    display: block;
    width: 10px;
    height: 10px;
    margin: 4px 0 0 1px;
    border: 1px solid #543;
    background: #f0f0f0;
    font-size: 12px;
    line-height: 6px;
  }

  .rebar-body {
    display: flex;
    flex-direction: column;
    flex: 1;
    min-width: 0;
    padding-right: 1px;
  }

  .nav {
    width: 23px;
    height: 24px;
    padding: 4px 3px;
    flex: none;
  }

  .nav .icon {
    display: block;
  }

  .total {
    margin-left: 5px;
  }

  .sheet {
    flex: 1;
    overflow: hidden;
    border: solid #999;
    border-width: 1px 1px 0 0;
    background: #fff;
  }

  table {
    width: 100%;
    table-layout: fixed;
    border-collapse: collapse;
    font-family: 'Noto Sans CJK SC', sans-serif;
    font-feature-settings: 'hwid';
    line-height: 12px;
  }

  th,
  td {
    box-sizing: border-box;
    padding: 0 0 2px 2px;
    overflow: hidden;
    border: 1px solid #b4b8b4;
    border-width: 0 1px 1px 0;
    text-align: left;
    font-weight: normal;
    white-space: pre;
  }

  th {
    padding: 0 0 2px;
    background: linear-gradient(#fff, #eee);
    text-align: center;
  }

  .hot {
    background: linear-gradient(#f8d49c, #efb75e);
    color: #640028;
  }

  .grid thead tr,
  .grid .empty {
    height: 19px;
  }

  .grid td {
    background: #ccffdb;
  }

  .grid .name {
    border-right-color: #000;
  }

  .grid .empty td {
    background: #fff;
  }

  .grid .center {
    text-align: center;
  }

  .grid .current {
    background: #ffd38a;
    color: #640028;
  }

  .grid .picked {
    background: #b2eedd;
  }

  .grid .figure {
    padding: 0;
  }

  .grid thead th:last-child {
    padding-left: 3px;
    text-align: left;
  }

  .c-no { width: 33px; }
  .c-name { width: 73px; }
  .c-dia { width: 56px; }
  .c-small { width: 36px; }
  .c-fig { width: 33px; }
  .c-shape { width: 201px; }
  .c-formula { width: 166px; }
  .c-note { width: 156px; }
  .c-len { width: 61px; }
  .c-lap { width: 39px; }
  .c-loss { width: 49px; }
  .c-unit { width: 61px; }
  .c-sum { width: 11px; }

  .mark {
    width: 12px;
    height: 10px;
    vertical-align: -1px;
  }

  .shape {
    display: block;
    fill: none;
    stroke: #000;
    stroke-width: 2;
  }

  .shape text {
    fill: #000;
    stroke: none;
  }

  .shape .red {
    fill: #c81e14;
  }

  .shape .thin {
    stroke-width: 1;
  }

  /* property editor */
  .panel {
    display: flex;
    flex-direction: column;
    padding: 2px 0 0 2px;
    min-height: 0;
  }

  .panel header {
    display: flex;
    align-items: center;
    gap: 9px;
    height: 15px;
    padding-right: 6px;
    background: #0a50dc;
    color: #fff;
  }

  h2 {
    flex: 1;
    margin: 0;
    font-size: 13px;
    line-height: 15px;
    font-weight: normal;
  }

  .panel header svg {
    display: block;
    width: 9px;
    height: 9px;
  }

  .panel-body {
    flex: 1;
    margin-right: 1px;
    padding: 1px 3px 0 1px;
    border: 1px solid #999;
    border-bottom: 0;
    background: #fff;
  }

  .panel tr {
    height: 19px;
  }

  .panel thead tr {
    height: 23px;
  }

  .panel td {
    border-color: #c0c0c0;
  }

  .panel tbody th {
    background: linear-gradient(90deg, #fff, #eee);
  }

  .p-no { width: 21px; }
  .p-name { width: 121px; }

  .panel .p-label {
    padding: 0;
  }

  .p-label div {
    display: flex;
    align-items: center;
    height: 18px;
  }

  .p-label.b {
    color: #0000d8;
  }

  .p-label.g {
    color: #888;
  }

  .indent {
    width: 20px;
    flex: none;
  }

  .branch {
    flex: none;
    fill: none;
    stroke: #b0b0b0;
  }

  .p-label button {
    width: 20px;
    padding-left: 2px;
    text-align: left;
    flex: none;
  }

  .p-label i {
    display: block;
    width: 11px;
    height: 11px;
    box-sizing: border-box;
    border: 1px solid #999;
    background: #f4f4f4;
    color: #000;
    font-style: normal;
    line-height: 9px;
    text-align: center;
  }

  .panel tbody .selected th {
    background: #ffd38a;
  }

  .panel .selected td {
    background: #e0eefc;
  }

  .panel .selected .p-label {
    background: #3296fa;
    color: #fff;
  }
</style>
